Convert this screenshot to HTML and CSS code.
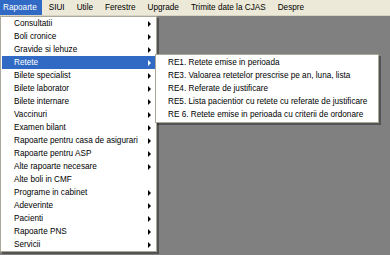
FILE: index.html
```html
<!DOCTYPE html>
<html lang="en">
<head>
<title>Rapoarte</title>
<meta charset="utf-8">
<meta name="viewport" content="width=device-width, initial-scale=1">
<link rel="stylesheet" href="styles.css">
</head>
<body>

<div class="menubar">
  <span class="top-item active">Rapoarte</span>
  <span class="top-item">SIUI</span>
  <span class="top-item">Utile</span>
  <span class="top-item">Ferestre</span>
  <span class="top-item">Upgrade</span>
  <span class="top-item">Trimite date la CJAS</span>
  <span class="top-item">Despre</span>
</div>

<div class="workspace"></div>

<!-- main dropdown -->
<ul class="menu dropdown">
  <li class="sub">Consultatii</li>
  <li class="sub">Boli cronice</li>
  <li class="sub">Gravide si lehuze</li>
  <li class="sub selected">Retete</li>
  <li class="sub">Bilete specialist</li>
  <li class="sub">Bilete laborator</li>
  <li class="sub">Bilete internare</li>
  <li class="sub">Vaccinuri</li>
  <li class="sub">Examen bilant</li>
  <li class="sub">Rapoarte pentru casa de asigurari</li>
  <li class="sub">Rapoarte pentru ASP</li>
  <li class="sub">Alte rapoarte necesare</li>
  <li>Alte boli in CMF</li>
  <li class="sub">Programe in cabinet</li>
  <li class="sub">Adeverinte</li>
  <li class="sub">Pacienti</li>
  <li class="sub">Rapoarte PNS</li>
  <li class="sub">Servicii</li>
</ul>

<!-- Retete submenu -->
<ul class="menu submenu">
  <li>RE1. Retete emise in perioada</li>
  <li>RE3. Valoarea retetelor prescrise pe an, luna, lista</li>
  <li>RE4. Referate de justificare</li>
  <li>RE5. Lista pacientior cu retete cu referate de justificare</li>
  <li>RE 6. Retete emise in perioada cu criterii de ordonare</li>
</ul>

</body>
</html>
```

FILE: styles.css
```css
* {
  box-sizing: border-box;
}

body {
  margin: 0;
  width: 390px;
  height: 255px;
  overflow: hidden;
  background-color: #808080;
  font-family: "Liberation Sans", Arial, sans-serif;
  font-size: 8.2px;
  color: #000;
  position: relative;
}

/* Style the menu bar */
.menubar {
  display: flex;
  height: 16px;
  background-color: #ECE9D8;
  border-bottom: 1px solid #D8D4C4;
}

.top-item {
  padding: 0 5px 0 3px;
  margin-right: 4px;
  line-height: 16px;
  white-space: nowrap;
}

.top-item.active {
  background-color: #316AC5;
  color: white;
}

.workspace {
  height: 239px;
}

/* Popup menus */
.menu {
  position: absolute;
  margin: 0;
  padding: 0;
  list-style: none;
  background-color: white;
  border: 1px solid #ACA899;
  box-shadow: 2px 2px 0 rgba(0, 0, 0, 0.35);
}

.menu li {
  height: 13px;
  line-height: 13px;
  padding-left: 12px;
  white-space: nowrap;
  position: relative;
}

.dropdown {
  left: 0;
  top: 16px;
  width: 157px;
}

.dropdown li {
  margin: 0 1px;
}

.dropdown li.selected {
  background-color: #316AC5;
  color: white;
}

/* submenu arrow */
.dropdown li.sub:after {
  content: "";
  position: absolute;
  right: 4px;
  top: 4px;
  border-left: 3px solid #000;
  border-top: 3px solid transparent;
  border-bottom: 3px solid transparent;
}

.dropdown li.selected:after {
  border-left-color: white;
}

.submenu {
  left: 155px;
  top: 54px;
  width: 224px;
  padding: 1px 0;
}
```
